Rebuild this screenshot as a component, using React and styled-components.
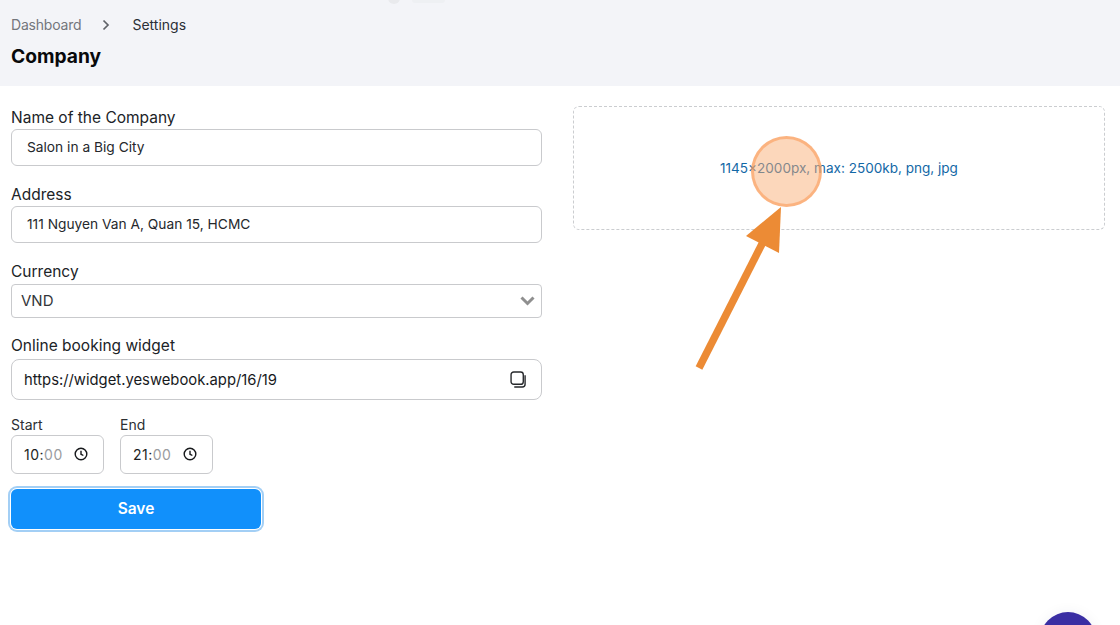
import React from 'react';
import styled, { createGlobalStyle } from 'styled-components';

const GlobalStyle = createGlobalStyle`
  html, body {
    margin: 0;
    padding: 0;
    background: #fff;
  }
  * {
    box-sizing: border-box;
  }
  body {
    font-family: Inter, "Liberation Sans", sans-serif;
    color: #1f2329;
  }
`;

const Page = styled.div`
  position: relative;
  width: 1120px;
  height: 625px;
  overflow: hidden;
  background: #fff;
`;

const Header = styled.header`
  height: 86px;
  padding: 16px 11px 0;
  background: #f3f4f8;
`;

const Breadcrumb = styled.nav`
  display: flex;
  align-items: center;
  height: 18px;
  font-size: 14px;
  line-height: 18px;
`;

const Crumb = styled.span`
  color: ${(p) => (p.$current ? '#2b2f36' : '#73767c')};
  letter-spacing: ${(p) => (p.$current ? '0' : '-0.2px')};
`;

const CrumbArrow = styled.svg`
  width: 10px;
  height: 12px;
  margin: 0 21px 0 20px;
`;

const Title = styled.h1`
  margin: 8px 0 0;
  font-size: 19.2px;
  line-height: 28px;
  font-weight: 700;
  color: #08090b;
`;

const Content = styled.main`
  display: grid;
  grid-template-columns: 531px 532px;
  column-gap: 31px;
  align-items: start;
  padding: 20px 0 0 11px;
`;

const Form = styled.form`
  display: flex;
  flex-direction: column;
`;

const Label = styled.label`
  display: block;
  height: 23px;
  font-size: 15.5px;
  line-height: 23px;
  color: #202327;
`;

const Field = styled.div`
  margin-bottom: ${(p) => p.$gap}px;
`;

const Input = styled.input`
  display: block;
  width: 100%;
  height: 37px;
  padding: 0 15px 1px;
  border: 1px solid #c9cacd;
  border-radius: 6px;
  background: #fff;
  font-family: inherit;
  font-size: 13.75px;
  color: #25282c;
  outline: none;
`;

const SelectBox = styled.div`
  display: flex;
  align-items: center;
  justify-content: space-between;
  height: 34px;
  margin-top: 1px;
  padding: 0 6px 1px 9px;
  border: 1px solid #c9cacd;
  border-radius: 4px;
  font-size: 15px;
  color: #33363a;
`;

const Chevron = styled.svg`
  width: 15px;
  height: 11px;
`;

const LinkBox = styled.div`
  display: flex;
  align-items: center;
  justify-content: space-between;
  height: 41px;
  margin-top: 2px;
  padding: 0 14px 0 12px;
  border: 1px solid #c9cacd;
  border-radius: 8px;
  font-size: 14.8px;
  color: #17191c;
`;

const CopyIcon = styled.svg`
  width: 17px;
  height: 17px;
`;

const TimeRow = styled.div`
  display: flex;
  gap: 16px;
  margin-bottom: 15px;
`;

const TimeLabel = styled.label`
  display: block;
  height: 20px;
  font-size: 14px;
  line-height: 20px;
  color: #2c2f33;
`;

const TimeBox = styled.div`
  display: flex;
  align-items: center;
  justify-content: space-between;
  width: 93px;
  height: 39px;
  padding: 0 15px 1px 12px;
  border: 1px solid #c9cacd;
  border-radius: 6px;
  font-size: 14px;
  letter-spacing: 0.5px;
  color: #1d1f23;
`;

const Minutes = styled.span`
  color: #9a9ca0;
`;

const ClockIcon = styled.svg`
  width: 14px;
  height: 14px;
`;

const SaveButton = styled.button`
  width: 250px;
  height: 40px;
  padding: 0 0 2px;
  border: 0;
  border-radius: 6px;
  background: #1190fb;
  box-shadow: 0 0 0 1px #fff, 0 0 0 3px #a3cff5;
  color: #fff;
  font-family: inherit;
  font-size: 15.5px;
  font-weight: 600;
`;

const DropZone = styled.div`
  display: flex;
  align-items: center;
  justify-content: center;
  height: 124px;
  padding-bottom: 1px;
  border: 1px dashed #cbcdd0;
  border-radius: 6px;
  font-size: 13.55px;
  color: #1368a6;
`;

const Spotlight = styled.div`
  position: absolute;
  left: 751px;
  top: 136px;
  width: 71px;
  height: 71px;
  border-radius: 50%;
  border: 3px solid rgba(252, 150, 80, 0.55);
  background: rgba(249, 171, 112, 0.48);
`;

const Pointer = styled.svg`
  position: absolute;
  left: 690px;
  top: 200px;
  width: 100px;
  height: 175px;
`;

const ChatBubble = styled.div`
  position: absolute;
  left: 1040px;
  top: 612px;
  width: 56px;
  height: 56px;
  border-radius: 50%;
  background: #3a2ea3;
  box-shadow: 0 0 14px rgba(40, 40, 80, 0.06);
`;

const FadedToast = styled.div`
  position: absolute;
  left: 388px;
  top: -8px;
  display: flex;
  align-items: center;
  gap: 12px;
`;

const FadedDot = styled.span`
  width: 12px;
  height: 12px;
  border-radius: 50%;
  background: #e9eaed;
`;

const FadedBar = styled.span`
  width: 33px;
  height: 9px;
  border-radius: 3px;
  background: #eef0f3;
`;

const TimeField = ({ label, hour }) => (
  <div>
    <TimeLabel>{label}</TimeLabel>
    <TimeBox>
      <span>{hour}:<Minutes>00</Minutes></span>
      <ClockIcon viewBox="0 0 13 13" fill="none" stroke="#17191c" strokeWidth="1.3">
        <circle cx="6.5" cy="6.5" r="5.4" />
        <path d="M6.5 3.4v3.3l2.2 1.2" />
      </ClockIcon>
    </TimeBox>
  </div>
);

const App = () => (
  <Page>
    <GlobalStyle />
    <Header>
      <Breadcrumb>
        <Crumb>Dashboard</Crumb>
        <CrumbArrow viewBox="0 0 10 12">
          <path d="M2.5 1.5 7 6l-4.5 4.5" fill="none" stroke="#5f6268" strokeWidth="1.7" />
        </CrumbArrow>
        <Crumb $current>Settings</Crumb>
      </Breadcrumb>
      <Title>Company</Title>
    </Header>
    <Content>
      <Form>
        <Field $gap={17}>
          <Label>Name of the Company</Label>
          <Input readOnly value="Salon in a Big City" />
        </Field>
        <Field $gap={17}>
          <Label>Address</Label>
          <Input readOnly value="111 Nguyen Van A, Quan 15, HCMC" />
        </Field>
        <Field $gap={16}>
          <Label>Currency</Label>
          <SelectBox>
            VND
            <Chevron viewBox="0 0 15 11">
              <path d="M1.5 2.5 7.5 8.5l6-6" fill="none" stroke="#8f8f8f" strokeWidth="3" />
            </Chevron>
          </SelectBox>
        </Field>
        <Field $gap={15}>
          <Label>Online booking widget</Label>
          <LinkBox>
            https://widget.yeswebook.app/16/19
            <CopyIcon viewBox="0 0 16 16" fill="none" stroke="#26282b">
              <rect x="1" y="1" width="11.5" height="11.5" rx="2.5" strokeWidth="1.3" />
              <path d="M14.2 4v8.5a2.6 2.6 0 0 1-2.6 2.6H4" strokeWidth="1.3" />
            </CopyIcon>
          </LinkBox>
        </Field>
        <TimeRow>
          <TimeField label="Start" hour="10" />
          <TimeField label="End" hour="21" />
        </TimeRow>
        <SaveButton type="button">Save</SaveButton>
      </Form>
      <DropZone>1145x2000px, max: 2500kb, png, jpg</DropZone>
    </Content>
    <FadedToast>
      <FadedDot />
      <FadedBar />
    </FadedToast>
    <Spotlight />
    <Pointer viewBox="0 0 100 175">
      <path d="M9 168 74 40" stroke="#ec8b35" strokeWidth="7.5" fill="none" />
      <path d="M91 7 56 36 89 53Z" fill="#ec8b35" />
    </Pointer>
    <ChatBubble />
  </Page>
);

export default App;
